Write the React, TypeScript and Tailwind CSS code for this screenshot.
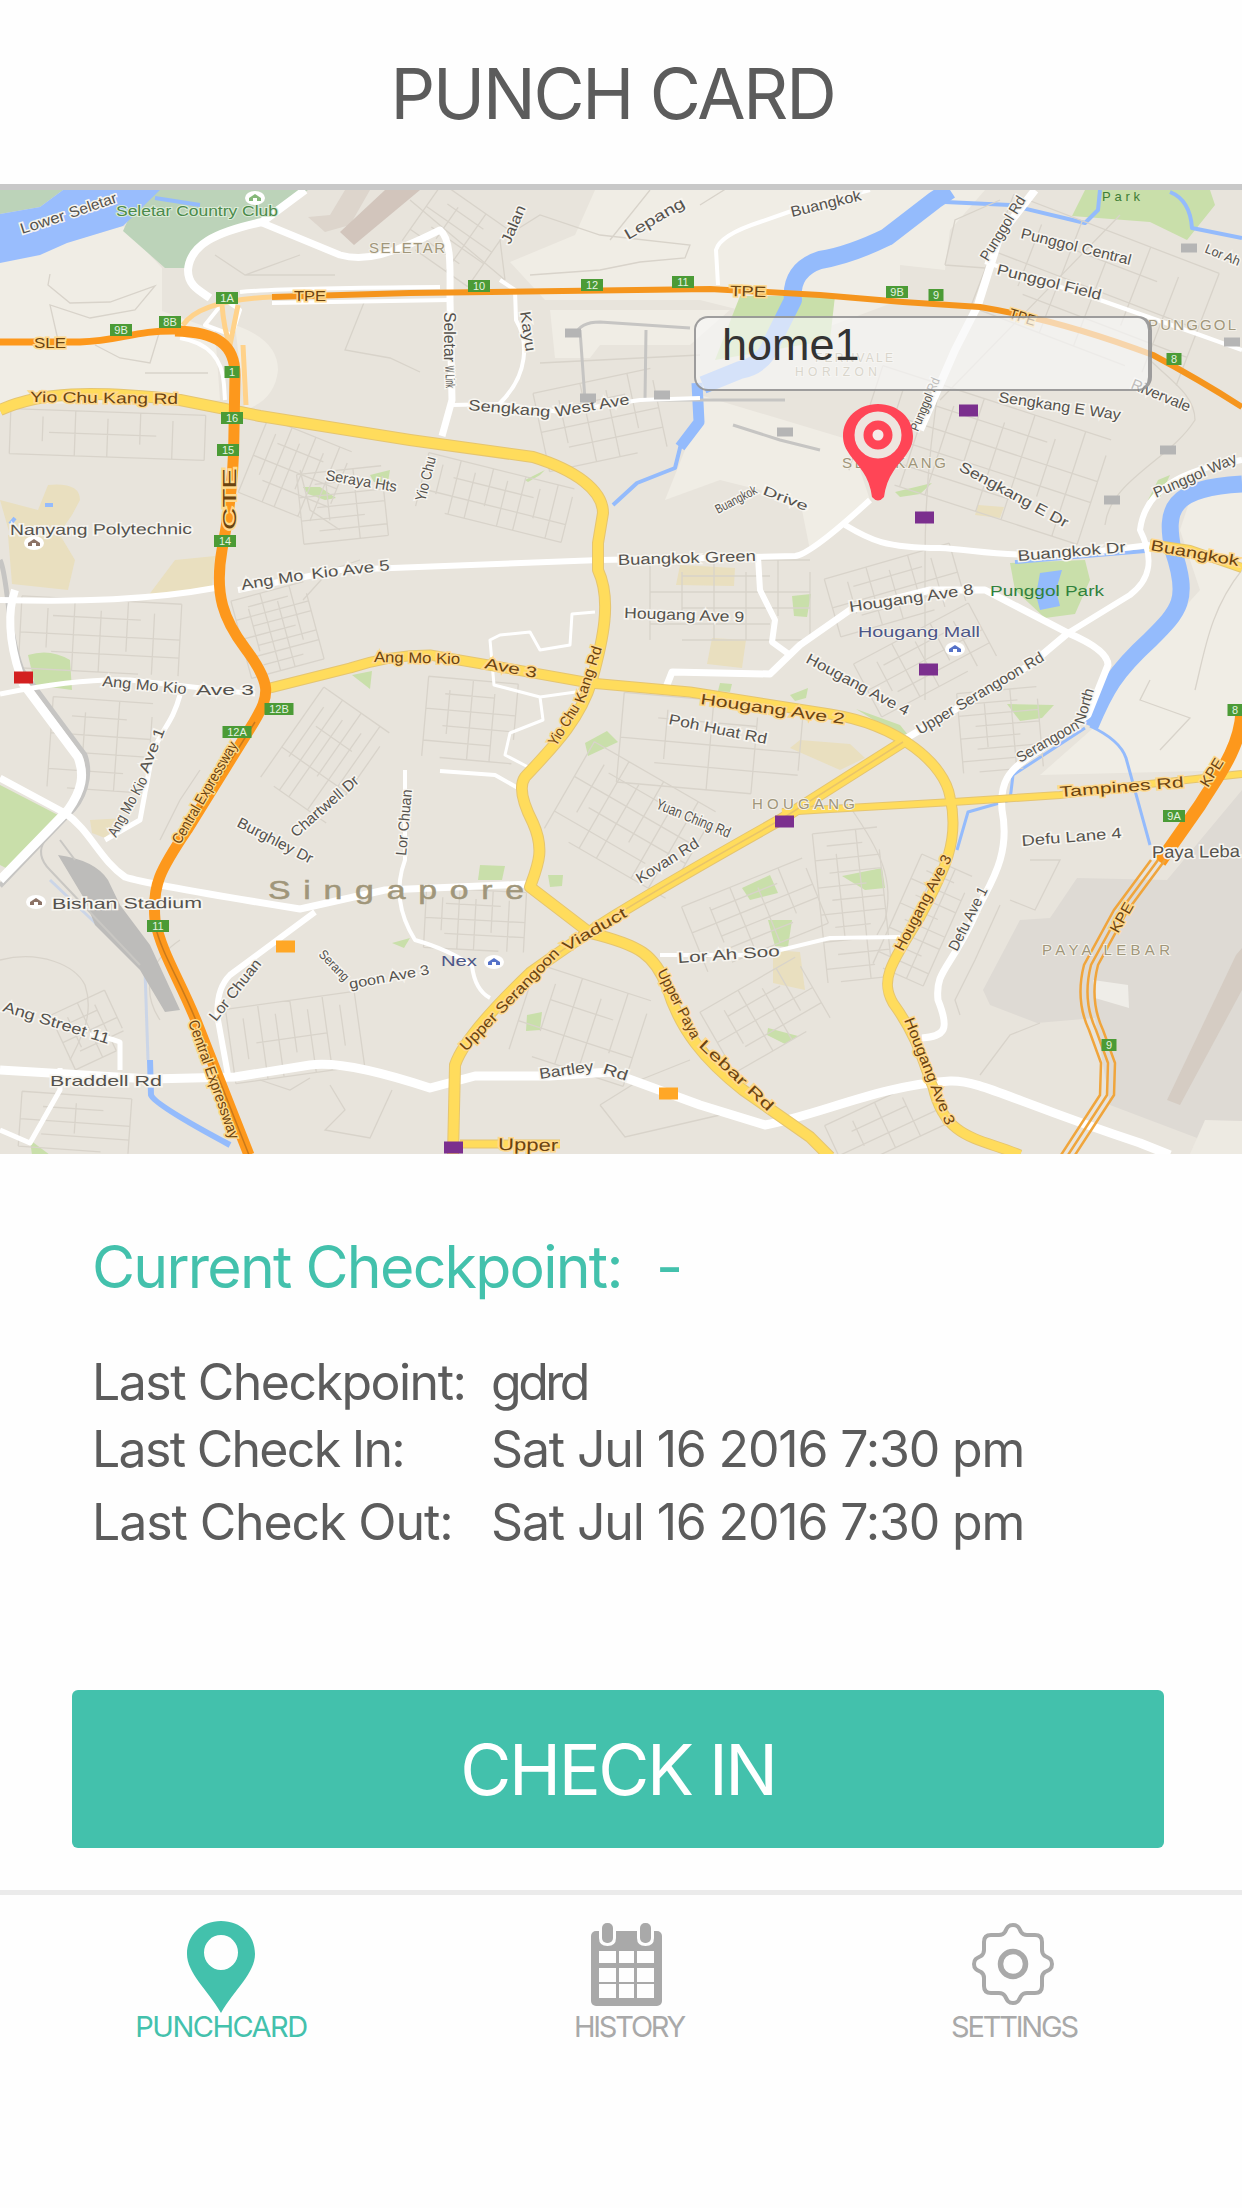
import { ReactNode } from 'react';

type Block = { x: number; y: number; w: number; h: number; angle: number; cols: number; rows: number };
type Label = [text: string, x1: number, y1: number, x2: number, y2: number, size?: number];

// Residential street grids, drawn as faint lines below the main roads
const blocks: Block[] = [
    { x: 250, y: 432, w: 90, h: 80, angle: 22, cols: 7, rows: 4 },
    { x: 300, y: 470, w: 85, h: 70, angle: -6, cols: 3, rows: 6 },
    { x: 10, y: 412, w: 195, h: 45, angle: 2, cols: 6, rows: 2 },
    { x: 240, y: 590, w: 75, h: 80, angle: -15, cols: 5, rows: 8 },
    { x: 20, y: 600, w: 160, h: 72, angle: 3, cols: 6, rows: 4 },
    { x: 285, y: 700, w: 80, h: 110, angle: 35, cols: 7, rows: 3 },
    { x: 50, y: 700, w: 100, h: 90, angle: 4, cols: 3, rows: 5 },
    { x: 230, y: 1000, w: 130, h: 75, angle: -8, cols: 8, rows: 2 },
    { x: 60, y: 1000, w: 60, h: 60, angle: -25, cols: 4, rows: 4 },
    { x: 420, y: 470, w: 150, h: 55, angle: 14, cols: 9, rows: 3 },
    { x: 415, y: 200, w: 80, h: 70, angle: 35, cols: 3, rows: 5 },
    { x: 425, y: 680, w: 90, h: 80, angle: 5, cols: 4, rows: 5 },
    { x: 560, y: 770, w: 140, h: 100, angle: 30, cols: 7, rows: 5 },
    { x: 425, y: 890, w: 100, h: 60, angle: 3, cols: 6, rows: 4 },
    { x: 520, y: 980, w: 120, h: 90, angle: 18, cols: 5, rows: 3 },
    { x: 690, y: 880, w: 130, h: 70, angle: -22, cols: 5, rows: 5 },
    { x: 710, y: 980, w: 110, h: 70, angle: -30, cols: 5, rows: 4 },
    { x: 820, y: 830, w: 65, h: 150, angle: -6, cols: 3, rows: 11 },
    { x: 895, y: 860, w: 55, h: 120, angle: 24, cols: 3, rows: 9 },
    { x: 860, y: 400, w: 240, h: 110, angle: 18, cols: 9, rows: 5 },
    { x: 985, y: 230, w: 220, h: 120, angle: 21, cols: 6, rows: 4 },
    { x: 650, y: 560, w: 160, h: 80, angle: 0, cols: 5, rows: 5 },
    { x: 830, y: 560, w: 130, h: 60, angle: -16, cols: 6, rows: 4 },
    { x: 860, y: 630, w: 130, h: 60, angle: -28, cols: 6, rows: 4 },
    { x: 960, y: 690, w: 80, h: 80, angle: -5, cols: 3, rows: 7 },
    { x: 620, y: 700, w: 180, h: 90, angle: 5, cols: 4, rows: 4 },
    { x: 540, y: 380, w: 120, h: 80, angle: -12, cols: 5, rows: 4 },
    { x: 830, y: 1100, w: 110, h: 50, angle: -25, cols: 4, rows: 3 },
    { x: 20, y: 1095, w: 110, h: 55, angle: 4, cols: 2, rows: 4 },
];

const lanes = [
    'M50 274 L48 285 L70 303 L110 302 L155 286 L135 310 L90 318 L50 305 L58 340',
    'M215 255 L245 275 L300 255 M245 275 L335 275 M365 300 L345 350 L390 358 L420 372',
    'M95 345 L120 358 L150 363 L160 330 M145 373 L208 373',
    'M505 280 L410 200 M505 280 L500 240 L540 215 L600 235 L690 245 L685 258 L640 262 L600 270 L530 275',
    'M540 363 L700 355 M610 240 L650 190 M700 205 L740 180',
    'M303 600 L330 570 L360 560 M300 470 L310 510 L340 530',
    'M0 960 C40 950 75 965 85 985 C95 1015 80 1040 70 1060',
    'M330 1085 L345 1110 L325 1130 L370 1138 L392 1090 M260 1080 L290 1090 L310 1078',
    'M600 1105 L640 1080 L690 1060 M600 1105 L625 1137 L720 1115',
    'M980 1075 L1010 1035 L1040 1023 M1030 860 L1060 860 L1035 910 L1010 900',
    'M940 380 C930 440 925 500 925 560 L925 700 M1105 525 C1110 480 1170 460 1195 420 C1195 395 1170 380 1150 360',
    'M1150 680 L1140 700 L1190 718 L1160 750 M1242 570 C1210 610 1205 650 1195 690',
    'M945 265 L955 220 L1000 200 M945 265 L985 268 M1120 215 L940 400',
    'M850 807 C880 850 895 880 885 920 L877 935 M1000 905 L975 960 L955 1000 L960 1015',
    'M160 840 L180 800 L200 770 M180 940 C150 960 140 990 160 1020',
];

const whiteRoads: [string, number][] = [
    ['M305 190 L262 222 C215 232 190 245 188 270 C188 285 198 290 210 298', 8],
    ['M260 222 L340 255 C365 262 390 255 440 230 C452 240 450 270 450 300 L452 400 L442 436', 7],
    ['M452 405 L500 404 L560 412 L640 400 L700 398', 4],
    ['M498 405 C530 375 528 340 516 320 L515 290 L500 280', 4],
    ['M718 285 L716 250 Q720 235 760 222 L800 208 L870 190', 4],
    ['M1035 190 L1000 235 L978 305 L955 350 L920 430', 8],
    ['M0 600 C80 602 150 600 215 588 M238 590 L340 570 L600 560 L795 556 Q810 555 870 500', 6],
    ['M845 525 C870 540 885 548 940 548 C980 550 1010 560 1100 551 L1150 545', 6],
    ['M758 557 L760 590 L775 620 L772 642 L790 655', 6],
    ['M1242 460 C1180 470 1145 490 1140 530 C1155 560 1150 580 1130 595 L1068 633', 6],
    ['M665 690 L672 672 L770 674 L800 645 L850 610 L930 590 L985 590 L1068 633 Q1108 650 1108 665 L1088 715 L1040 750 C1005 770 1000 785 1002 810 C1012 860 985 890 975 915 C950 970 935 970 938 1000 C950 1030 945 1036 922 1038', 7],
    ['M900 742 L1030 665 L1068 633', 7],
    ['M1242 350 L1200 335 L1100 300 L985 262', 4],
    ['M0 694 Q80 678 130 680 L255 694 M180 695 C172 725 160 730 152 755 L140 820 L105 840', 5],
    ['M15 590 C8 610 8 640 20 675', 8],
    ['M22 682 L78 757 C85 775 82 790 68 810 L0 880', 9],
    ['M0 778 L65 813 C90 830 100 860 125 877 Q150 885 300 909 L385 890 L530 884', 7],
    ['M315 912 L230 975 Q215 990 218 1020 L228 1075', 6],
    ['M405 770 L405 860 Q390 900 415 940 Q450 950 472 966 Q475 990 490 998', 4],
    ['M0 1070 L150 1079 L235 1077 L310 1065 Q345 1060 430 1088 L475 1076 L550 1076 L610 1072 L700 1105 L765 1125 C820 1115 880 1085 950 1081 C980 1080 1010 1100 1140 1143 L1170 1155', 9],
    ['M60 1068 L60 1090 L30 1143 L0 1130 M120 1070 L120 1042 Q100 1035 90 1035', 5],
    ['M595 612 L572 614 L570 645 L540 650 L530 632 L500 635 L490 640 L494 685 L540 697 L543 720 L510 733 L505 755 L530 768 M540 697 L590 690', 3],
    ['M440 771 L495 775 L518 788 M660 955 L760 955 L830 938 L900 937', 4],
];

const orangeRoads: [string, number][] = [
    ['M175 331 C218 332 235 345 235 375 L234 430 C234 480 228 520 222 550 C214 595 224 620 245 648 C272 684 270 695 254 722 L187 830 C160 870 152 885 155 920 C162 955 180 980 197 1023 L249 1155', 11],
    ['M0 342 L80 342 C120 341 135 330 178 331', 7],
    ['M1242 712 C1240 750 1215 780 1200 805 L1160 862', 13],
];

const yellowRoads: [string, number][] = [
    ['M0 410 C40 392 90 390 180 400 L260 416 L410 440 L533 457 C575 470 603 490 603 513 L598 543 L598 570 C612 600 603 640 592 680 C580 720 553 747 525 777 Q516 790 533 823 C545 850 538 865 530 887 L590 933 C640 945 655 955 667 987 C680 1030 705 1060 743 1090 L810 1137 L830 1157', 10],
    ['M270 688 L350 668 Q390 655 430 655 L500 667 L590 683 L690 692 L830 714 C900 725 945 765 950 797 C960 840 945 870 920 917 C890 965 880 980 893 1003 C920 1040 925 1070 933 1087 C945 1140 980 1138 1020 1155', 9],
    ['M453 1155 L455 1065 Q465 1035 530 973 C590 930 620 910 780 820 L903 742', 10],
    ['M782 812 L830 809 L953 802 L1060 795 L1140 785 L1242 774', 6],
    ['M1150 544 L1190 550 L1242 568', 8],
    ['M460 1144 L560 1144', 7],
];

const parks = [
    'M740 296 L835 296 L830 340 L715 360 Z',
    'M1085 190 L1210 190 L1215 205 L1187 240 L1150 222 L1072 216 Z',
    'M1010 563 L1085 560 L1090 580 L1075 614 L1045 618 L1015 590 Z',
    'M28 655 Q50 648 70 660 L72 690 L35 685 Z',
    'M0 785 L58 815 L10 870 L0 865 Z',
    'M30 1140 L50 1155 L32 1155 Z',
    'M370 475 L390 470 L388 482 L374 482 Z',
    'M303 487 L320 487 L336 498 L325 500 L308 494 Z',
    'M525 480 L545 470 L540 475 L528 482 Z',
    'M585 743 L607 731 L618 742 L588 756 Z',
    'M480 865 L505 866 L502 880 L478 880 Z',
    'M548 875 L563 875 L562 886 L550 887 Z',
    'M742 888 L770 875 L778 893 L750 900 Z',
    'M768 920 L792 920 L788 947 L775 946 Z',
    'M527 1015 L542 1012 L540 1030 L526 1031 Z',
    'M768 1028 L798 1036 L785 1044 L767 1035 Z',
    'M792 596 L811 594 L807 617 L794 616 Z',
    'M720 683 L732 684 L730 692 L718 691 Z',
    'M790 695 L808 688 L806 698 L795 701 Z',
    'M1007 704 L1054 705 L1042 718 L1020 721 Z',
    'M842 876 L882 868 L885 888 L865 890 Z',
    'M895 492 L932 483 L920 494 L900 497 Z',
    'M352 675 L372 671 L370 689 Z',
    'M392 943 L410 938 L404 948 Z',
    'M856 709 L900 725 L908 735 L895 733 Z',
    'M1158 480 L1170 475 L1160 497 L1148 500 Z',
];

const schools = [
    'M48 485 Q80 482 80 500 L72 515 L58 535 L10 535 L0 500 L38 510 Z',
    'M8 535 L60 535 L75 560 L68 590 L12 584 Z',
    'M175 560 L215 556 L212 588 L148 596 Z',
    'M680 565 L735 568 L734 586 L676 585 Z',
    'M712 638 L746 640 L742 668 L707 664 Z',
    'M800 740 L850 744 L865 758 L840 770 L790 748 Z',
    'M773 950 L800 952 L805 990 L773 983 Z',
    'M978 505 L1004 507 L1000 518 L975 515 Z',
    'M90 820 L125 818 L105 838 L92 833 Z',
];

// Road names: baseline runs from (x1, y1) to (x2, y2)
const streetNames: Label[] = [
    ['Lower', 22, 234, 66, 220], ['Seletar', 71, 218, 118, 202],
    ['Sengkang', 468, 410, 550, 417], ['West Ave', 556, 417, 630, 404],
    ['Seletar', 444, 312, 444, 362, 16], ['W Link', 445, 366, 446, 388, 13],
    ['Jalan', 510, 245, 526, 208], ['Kayu', 520, 312, 526, 352],
    ['Lepang', 628, 240, 686, 206], ['Buangkok', 792, 217, 862, 200],
    ['Seraya Hts', 325, 480, 396, 492],
    ['Ang Mo', 242, 590, 304, 580], ['Kio Ave 5', 312, 579, 390, 570],
    ['Buangkok Green', 618, 565, 756, 561], ['Hougang Ave 9', 624, 618, 744, 622],
    ['Yio Chu', 425, 502, 436, 458], ['Buangkok', 718, 514, 758, 493, 13], ['Drive', 762, 494, 806, 511, 13],
    ['Punggol Central', 1020, 238, 1130, 265], ['Punggol Field', 996, 274, 1100, 300],
    ['Sengkang E Way', 998, 402, 1120, 420], ['Sengkang E Dr', 958, 470, 1065, 528],
    ['Punggol Rd', 918, 432, 940, 380, 13], ['Punggol Rd', 988, 262, 1026, 200],
    ['Rivervale', 1130, 388, 1188, 412], ['Buangkok Dr', 1018, 561, 1126, 552],
    ['Hougang Ave 8', 850, 612, 974, 594], ['Punggol Way', 1156, 498, 1238, 462],
    ['Lor Ah', 1204, 252, 1238, 266, 13],
    ['Upper Serangoon Rd', 920, 735, 1045, 660],
    ['Hougang Ave 4', 805, 662, 906, 716],
    ['Serangoon', 1020, 763, 1080, 728], ['North', 1084, 725, 1094, 690],
    ['Ang Mo Kio', 102, 686, 186, 694], ['Ave 3', 196, 695, 254, 695],
    ['Ang Mo Kio', 116, 838, 148, 780], ['Ave 1', 148, 774, 165, 730],
    ['Poh Huat Rd', 668, 724, 766, 744], ['Defu Lane 4', 1022, 846, 1122, 838],
    ['Yuan Ching Rd', 655, 808, 728, 838], ['Kovan Rd', 640, 884, 700, 846],
    ['Burghley Dr', 236, 826, 310, 864], ['Chartwell Dr', 296, 838, 360, 782],
    ['Lor Chuan', 406, 856, 412, 790], ['Lor Chuan', 216, 1022, 262, 964],
    ['Serang', 318, 955, 344, 982, 13], ['goon Ave 3', 350, 989, 430, 974, 14],
    ['Lor Ah Soo', 678, 963, 780, 956], ['Bartley', 540, 1079, 594, 1071], ['Rd', 602, 1073, 626, 1081],
    ['Defu Ave 1', 957, 952, 988, 890],
    ['Ang Street 11', 2, 1011, 108, 1044],
    ['Braddell Rd', 50, 1086, 162, 1086],
    ['Paya Leba', 1152, 858, 1240, 857, 17],
    ['Nanyang Polytechnic', 10, 535, 192, 534], ['Bishan Stadium', 52, 909, 202, 908],
];

const highwayNames: Label[] = [
    ['SLE', 34, 348, 66, 348], ['TPE', 294, 301, 326, 301], ['TPE', 730, 296, 766, 297],
    ['Yio Chu Kang Rd', 30, 402, 178, 404], ['CTE', 236, 530, 236, 468, 18],
    ['Ang Mo Kio', 374, 662, 460, 664], ['Ave 3', 484, 668, 536, 678],
    ['Hougang Ave 2', 700, 704, 844, 724],
    ['Yio Chu', 556, 747, 580, 708], ['Kang Rd', 584, 704, 602, 648],
    ['Upper Serangoon', 466, 1052, 560, 954], ['Viaduct', 566, 952, 628, 916],
    ['Upper Paya', 657, 972, 692, 1040], ['Lebar Rd', 698, 1046, 768, 1112],
    ['Hougang Ave 3', 903, 952, 952, 858], ['Hougang Ave 3', 904, 1020, 946, 1126],
    ['Tampines Rd', 1060, 797, 1184, 787], ['KPE', 1208, 788, 1224, 762], ['KPE', 1118, 934, 1134, 906],
    ['Buangkok', 1150, 550, 1238, 566], ['TPE', 1008, 318, 1034, 326],
    ['Central Expressway', 180, 845, 238, 745], ['Central Expressway', 188, 1022, 230, 1140],
    ['Upper', 498, 1150, 558, 1151, 17],
];

const exits: [string, number, number][] = [
    ['1A', 227, 298], ['8B', 170, 322], ['9B', 121, 330], ['1', 232, 372], ['16', 232, 418], ['15', 228, 450],
    ['14', 225, 541], ['10', 479, 286], ['12', 592, 285], ['11', 683, 282], ['9B', 897, 292], ['9', 936, 295],
    ['8', 1174, 359], ['12B', 279, 709], ['12A', 237, 732], ['11', 158, 926], ['9A', 1174, 816],
    ['9', 1109, 1045], ['8', 1235, 710],
];

const stations: [string, number, number][] = [
    ['#7b2f8e', 968, 410], ['#7b2f8e', 924, 517], ['#7b2f8e', 928, 669], ['#7b2f8e', 784, 821], ['#7b2f8e', 453, 1147],
    ['#ffa726', 285, 946], ['#ffa726', 668, 1093], ['#d32020', 23, 677],
    ['#b5b5b5', 574, 334], ['#b5b5b5', 589, 399], ['#b5b5b5', 663, 396], ['#b5b5b5', 786, 433],
    ['#b5b5b5', 1190, 249], ['#b5b5b5', 1233, 343], ['#b5b5b5', 1169, 451], ['#b5b5b5', 1113, 501],
];

function RoadName({ label, fill, halo }: { label: Label; fill: string; halo: string }) {
    const [text, x1, y1, x2, y2, size = 15] = label;
    const angle = (Math.atan2(y2 - y1, x2 - x1) * 180) / Math.PI;
    return (
        <text
            transform={`translate(${x1} ${y1}) rotate(${angle})`}
            fontSize={size}
            textLength={Math.hypot(x2 - x1, y2 - y1)}
            lengthAdjust="spacingAndGlyphs"
            fill={fill}
            stroke={halo}
            strokeWidth={3}
            paintOrder="stroke"
        >
            {text}
        </text>
    );
}

function StreetGrid({ block }: { block: Block }) {
    const { x, y, w, h, angle, cols, rows } = block;
    let d = '';
    for (let i = 0; i <= cols; i++) {
        const px = (w / cols) * i;
        d += `M${px} ${i % 2 ? h * 0.15 : 0} V${i % 3 === 1 ? h * 0.7 : h} `;
    }
    for (let i = 0; i <= rows; i++) {
        const py = (h / rows) * i;
        d += `M${i % 2 ? w * 0.2 : 0} ${py} H${i % 3 === 1 ? w * 0.75 : w} `;
    }
    return <path d={d} transform={`translate(${x} ${y}) rotate(${angle} ${w / 2} ${h / 2})`} />;
}

function AreaName({ x, y, w, size = 15, children }: { x: number; y: number; w: number; size?: number; children: string }) {
    return (
        <text x={x} y={y} fontSize={size} textLength={w} fill="#a0967a" stroke="#f3f0e9" strokeWidth={2} paintOrder="stroke">
            {children}
        </text>
    );
}

function CityMap() {
    return (
        <svg viewBox="0 190 1242 964" className="block h-[964px] w-full" preserveAspectRatio="none" fontFamily="Liberation Sans, Arial, sans-serif">
            <rect y="190" width="1242" height="964" fill="#e8e4dc" />

            {/* Open land */}
            <g fill="#f0ede5">
                <path d="M0 262 L123 226 L162 268 L162 311 L215 330 L220 400 L0 405 Z" />
                <path d="M235 325 Q278 340 278 370 Q275 400 245 410 Z" />
                <path d="M595 190 L985 190 L950 230 L945 270 L900 265 L900 300 L820 330 L700 300 L545 300 L510 262 L575 235 Z" />
                <path d="M550 310 L730 310 L690 345 L600 345 L590 358 L555 358 Z" />
                <path d="M700 395 L850 440 L870 500 L810 550 L800 500 L720 480 L665 500 L685 450 Z" />
                <path d="M1242 490 L1190 500 L1180 530 L1200 590 L1110 690 L1100 722 L1040 775 L1242 770 Z" />
            </g>

            {/* Airports and runways */}
            <path d="M1242 790 L1167 880 L1077 878 L1050 918 L1020 920 L983 990 L990 1005 L1037 1023 L1095 1018 L1110 1105 L1242 1155 Z" fill="#dedad4" />
            <path d="M1205 1120 L1242 1121 L1242 1154 L1190 1154 Z" fill="#edeae2" />
            <path d="M1093 980 L1128 985 L1129 1008 L1095 998 Z" fill="#efede8" />
            <path d="M1236 955 L1242 948 L1242 990 L1180 1105 L1167 1100 Z" fill="#d5ccc3" />
            <path d="M345 190 L330 215 L308 217 L325 232 L350 225 L370 190 Z" fill="#ddd5cc" />
            <path d="M385 190 L420 190 L354 245 L340 232 Z" fill="#d2c5bc" />

            <path d="M0 190 H63 L40 207 L0 214 Z M150 190 H308 L262 220 C215 230 190 245 185 268 H165 L123 231 L128 220 Z" fill="#bcd3b9" />
            <g fill="#c9dfaa">{parks.map((d) => <path key={d} d={d} />)}</g>
            <g fill="#e9dfbf">{schools.map((d) => <path key={d} d={d} />)}</g>

            {/* Water */}
            <path d="M63 190 H160 L123 226 L67 243 L40 255 L0 263 V214 L40 207 Z" fill="#99bdfd" />
            <g fill="none" stroke="#94bbfc" strokeLinejoin="round">
                <path d="M950 190 L935 200 L887 237 Q850 255 820 260 Q790 270 793 300 L773 340 Q765 365 740 370 L703 385" strokeWidth="18" />
                <path d="M697 383 L699 422 L680 447" strokeWidth="11" />
                <path d="M682 440 L675 468 L637 483 L613 505" strokeWidth="4" />
                <path d="M1242 484 C1170 488 1165 510 1173 550 C1190 600 1180 610 1150 640 C1115 672 1105 690 1090 726" strokeWidth="17" />
                <path d="M1090 726 Q1120 740 1126 758 L1150 845 M1085 728 L1013 775 L1010 800 L968 812 L957 850" strokeWidth="3" />
                <path d="M945 202 L1010 205 L1085 223 L1098 210 L1100 190 M1170 192 Q1190 200 1192 228 L1242 238" strokeWidth="4" />
                <path d="M150 1060 L151 1095 Q155 1105 230 1145" strokeWidth="6" />
                <path d="M1015 562 L1145 551 M155 198 L200 205 M10 524 L15 518 M45 505 L53 505" strokeWidth="4" />
                <path d="M145 970 L148 1060 M50 880 L145 970" strokeWidth="3" opacity="0.35" />
            </g>
            <path d="M1040 573 L1062 570 L1056 590 L1060 606 L1040 610 L1036 595 Z" fill="#94bbfc" />

            <g fill="none" stroke="#d8d3ca" strokeWidth="1.3">
                {blocks.map((b) => <StreetGrid key={`${b.x}-${b.y}`} block={b} />)}
                {lanes.map((d) => <path key={d} d={d} />)}
            </g>

            {/* Depot */}
            <path d="M58 855 Q95 860 108 880 L120 905 L150 945 L180 1010 L165 1012 L140 970 L95 925 L85 900 Z" fill="#bdbcba" />
            <path d="M45 840 Q35 855 50 870 L140 965 M60 840 L75 860" fill="none" stroke="#c9c7c3" strokeWidth="2" />
            <g fill="none" stroke="#c6c5c3" strokeWidth="3">
                <path d="M0 560 C8 575 7 630 22 670 L85 755 C92 775 85 800 68 815 L0 886" strokeWidth="5" />
                <path d="M575 335 Q580 322 600 322 L690 328 M580 330 L585 400 M646 330 L645 400 L785 400 M733 425 L780 440 L820 450" />
            </g>

            <g fill="none" stroke="#ffffff" strokeLinejoin="round">
                {whiteRoads.map(([d, w]) => <path key={d} d={d} strokeWidth={w} />)}
                <path d="M240 292 Q280 288 440 287 M272 303 L450 300 M205 325 L225 300 L240 310 L232 335 Z" strokeWidth="4" />
                <path d="M180 338 Q222 345 224 385 L225 400" strokeWidth="4" />
            </g>
            <g fill="none" stroke="#ffd28a" strokeWidth="5">
                <path d="M183 325 Q200 300 272 297 M238 305 L230 345 M222 305 Q224 330 230 345 M243 345 L246 405" />
                <path d="M1252 700 L1230 760 L1190 820" />
            </g>

            <g fill="none" strokeLinejoin="round">
                {yellowRoads.map(([d, w]) => <path key={d} d={d} stroke="#e5c570" strokeWidth={w + 2} />)}
                {yellowRoads.map(([d, w]) => <path key={d} d={d} stroke="#ffdc5c" strokeWidth={w} />)}
                {orangeRoads.map(([d, w]) => <path key={d} d={d} stroke="#fd981c" strokeWidth={w} />)}
                <path d="M272 297 L410 293 L710 289 L820 295 L903 302 L980 307 Q1060 320 1153 355 Q1200 380 1242 407" stroke="#f5951d" strokeWidth="6" />
                {/* Viaduct deck line */}
                <path d="M530 973 C590 930 620 910 780 820 L903 742" stroke="#e9c569" strokeWidth="1.5" />
                <path d="M255 722 L187 830 M155 925 C162 955 180 980 197 1023 L249 1155" stroke="#c9791a" strokeWidth="1.5" />
            </g>
            {/* Tunnelled part of the expressway */}
            <g fill="none" stroke="#f0a53c" strokeWidth="2.5">
                {[-7, 0, 7].map((dx) => (
                    <path
                        key={dx}
                        transform={`translate(${dx} 0)`}
                        d="M1158 860 L1121 910 L1091 965 Q1082 1000 1096 1030 L1108 1063 L1107 1095 L1068 1155"
                    />
                ))}
            </g>

            <g>{streetNames.map((l) => <RoadName key={`${l[0]}-${l[1]}`} label={l} fill="#55524d" halo="#f7f5f0" />)}</g>
            <g>{highwayNames.map((l) => <RoadName key={`${l[0]}-${l[1]}`} label={l} fill="#6b430f" halo="#ffd98c" />)}</g>

            {exits.map(([n, x, y]) => {
                const w = n.length * 7 + 8;
                return (
                    <g key={`${n}-${x}`}>
                        <rect x={x - w / 2} y={y - 6} width={w} height="12" fill="#4b9b36" />
                        <text x={x} y={y + 4} fontSize="11" textAnchor="middle" fill="#e5f2e0">{n}</text>
                    </g>
                );
            })}
            {stations.map(([fill, x, y]) => (
                <rect key={`${x}-${y}`} x={x - 9} y={y - 5.5} width={fill === '#b5b5b5' ? 16 : 19} height={fill === '#b5b5b5' ? 9 : 12} fill={fill} />
            ))}

            <text x="116" y="216" fontSize="14" textLength="162" lengthAdjust="spacingAndGlyphs" fill="#4b8a4b" stroke="#dcebd8" strokeWidth="2" paintOrder="stroke">Seletar Country Club</text>
            <text x="1102" y="201" fontSize="13" textLength="38" fill="#3d7d34">Park</text>
            <text x="990" y="596" fontSize="14" textLength="114" lengthAdjust="spacingAndGlyphs" fill="#30813c">Punggol Park</text>
            <text x="858" y="637" fontSize="15" textLength="122" lengthAdjust="spacingAndGlyphs" fill="#4c5688" stroke="#f3f0e9" strokeWidth="2" paintOrder="stroke">Hougang Mall</text>
            <text x="441" y="966" fontSize="14" textLength="36" lengthAdjust="spacingAndGlyphs" fill="#4c5688">Nex</text>
            {[[494, 962], [955, 649], [34, 543], [36, 902], [255, 198]].map(([x, y], i) => (
                <g key={x}>
                    <ellipse cx={x} cy={y} rx="10" ry="7" fill="#ffffff" />
                    <path d={`M${x - 6} ${y + 3} V${y} L${x} ${y - 4} L${x + 6} ${y} V${y + 3} H${x + 2} V${y} H${x - 2} V${y + 3} Z`} fill={['#5572c8', '#5572c8', '#8c7366', '#8c7366', '#85b979'][i]} />
                </g>
            ))}
            <AreaName x={369} y={253} w={76}>SELETAR</AreaName>
            <AreaName x={1148} y={330} w={88}>PUNGGOL</AreaName>
            <AreaName x={815} y={362} w={78} size={12}>FERNVALE</AreaName>
            <AreaName x={795} y={376} w={82} size={12}>HORIZON</AreaName>
            <AreaName x={842} y={468} w={104}>SENGKANG</AreaName>
            <AreaName x={752} y={809} w={103}>HOUGANG</AreaName>
            <AreaName x={1042} y={955} w={128}>PAYA LEBAR</AreaName>
            <text transform="translate(268 899) scale(1.3 1)" fontSize="26" textLength="197" fill="#a0967a" stroke="#a0967a" strokeWidth="0.5">Singapore</text>
        </svg>
    );
}

function MapPin() {
    return (
        <svg viewBox="0 0 70 97" className="absolute left-[843px] top-[214px] h-[97px] w-[70px]">
            <path d="M35 0 C15 0 0 14 0 32 C0 47 11 54 20 68 Q27 78 29 93 Q35 100 41 93 Q43 78 50 68 C59 54 70 47 70 32 C70 14 55 0 35 0 Z" fill="#ff4556" />
            <circle cx="35" cy="31" r="19" fill="none" stroke="#eee5df" strokeWidth="9" />
            <circle cx="35" cy="31" r="5.5" fill="#f6ebe8" />
        </svg>
    );
}

function PinIcon() {
    return (
        <svg viewBox="0 0 68 92" className="mr-[1px] h-[92px] w-[68px]">
            <path fillRule="evenodd" fill="#43c1ac" d="M34 0 C14 0 0 14 0 33 C0 52 20 68 34 92 C48 68 68 52 68 33 C68 14 54 0 34 0 Z M34 14 A17 17.5 0 1 1 34 49 A17 17.5 0 1 1 34 14 Z" />
        </svg>
    );
}

function CalendarIcon() {
    return (
        <svg viewBox="0 0 72 84" className="mt-[2px] mr-[4px] h-[84px] w-[72px]">
            <rect x="0" y="8" width="71" height="75" rx="5" fill="#a9a9a9" />
            <path d="M8 8 H25 V15 Q25 23 16.500 23 Q8 23 8 15 Z M46 8 H63 V15 Q63 23 54.500 23 Q46 23 46 15 Z" fill="#fefefe" />
            <rect x="11" y="0" width="11" height="20" rx="5" fill="#a9a9a9" />
            <rect x="49" y="0" width="11" height="20" rx="5" fill="#a9a9a9" />
            {[28, 45, 61].map((y) => [8, 28, 46].map((x) => (
                <rect key={`${x}-${y}`} x={x} y={y} width={x === 28 ? 15 : 17} height={y === 28 ? 12 : 14} fill="#fefefe" />
            )))}
        </svg>
    );
}

function GearIcon() {
    return (
        <svg viewBox="0 0 82 82" className="mt-[2px] mr-[2px] h-[82px] w-[82px]" fill="none" stroke="#a9a9a9" strokeWidth="4" strokeLinejoin="round">
            <path d="M41 2 C46 2 47 5 49 9 Q51 12 55 12 H63 Q70 12 70 19 V27 Q70 31 73 33 C77 35 80 36 80 41 C80 46 77 47 73 49 Q70 51 70 55 V63 Q70 70 63 70 H55 Q51 70 49 73 C47 77 46 80 41 80 C36 80 35 77 33 73 Q31 70 27 70 H19 Q12 70 12 63 V55 Q12 51 9 49 C5 47 2 46 2 41 C2 36 5 35 9 33 Q12 31 12 27 V19 Q12 12 19 12 H27 Q31 12 33 9 C35 5 36 2 41 2 Z" />
            <circle cx="41" cy="41" r="12.500" strokeWidth="5.500" />
        </svg>
    );
}

function Tab({ icon, label, className }: { icon: ReactNode; label: string; className: string }) {
    return (
        <button className={`flex w-[200px] flex-col items-center whitespace-nowrap text-[29px] leading-[27px] ${className}`}>
            <span className="flex h-[92px] items-start">{icon}</span>
            <span>{label}</span>
        </button>
    );
}

export default function App() {
    const rows = [
        { name: 'Last Checkpoint:', value: 'gdrd', className: 'h-[67px] tracking-[-1.5px]', valueClass: 'tracking-[-3.5px]' },
        { name: 'Last Check In:', value: 'Sat Jul 16 2016 7:30 pm', className: 'h-[73px] tracking-[-1.7px]', valueClass: 'tracking-[-1.15px]' },
        { name: 'Last Check Out:', value: 'Sat Jul 16 2016 7:30 pm', className: 'h-[67px] tracking-[-1.1px]', valueClass: 'tracking-[-1.15px]' },
    ];

    return (
        <div className="flex h-[2208px] w-[1242px] flex-col overflow-hidden bg-[#fefefe] font-['Inter',sans-serif] text-[#5c5c5c]">
            <header className="flex h-[190px] shrink-0 justify-center border-b-[6px] border-[#c8c8c8] pt-[59px] pr-[17px]">
                <h1 className="whitespace-nowrap text-[70px] leading-[70px] tracking-[-2.2px]">PUNCH CARD</h1>
            </header>

            <section className="relative shrink-0">
                <CityMap />
                <div className="absolute left-[694px] top-[126px] h-[75px] w-[458px] rounded-[14px] border-2 border-r-4 border-[#777]/70 bg-[#f8f8f8]/65 pl-[26px] font-['Liberation_Sans',Arial,sans-serif] text-[45px] leading-[54px] text-[#333]">
                    home1
                </div>
                <MapPin />
            </section>

            <section className="h-[536px] shrink-0 pl-[92px] pt-[78px]">
                <div className="flex h-[113px] text-[59px] leading-[70px] text-[#43c1ac]">
                    <span className="w-[564px] whitespace-nowrap tracking-[-1.75px]">Current Checkpoint:</span>
                    <span>-</span>
                </div>
                {rows.map((row) => (
                    <div key={row.name} className={`flex whitespace-nowrap text-[50px] leading-[74px] ${row.className}`}>
                        <span className="w-[399px] shrink-0">{row.name}</span>
                        <span className={row.valueClass}>{row.value}</span>
                    </div>
                ))}
            </section>

            <button className="ml-[72px] h-[158px] w-[1092px] shrink-0 rounded-[6px] bg-[#43c1ac] text-[70px] tracking-[-2.4px] text-white">
                CHECK IN
            </button>

            <nav className="mt-[42px] flex border-t-[5px] border-[#ebebeb] pt-[26px]">
                <Tab icon={<PinIcon />} label="PUNCHCARD" className="ml-[121px] tracking-[-1.5px] text-[#43c1ac]" />
                <Tab icon={<CalendarIcon />} label="HISTORY" className="ml-[208px] tracking-[-2.2px] text-[#a9a9a9]" />
                <Tab icon={<GearIcon />} label="SETTINGS" className="ml-[185px] tracking-[-2.2px] text-[#a9a9a9]" />
            </nav>
        </div>
    );
}
